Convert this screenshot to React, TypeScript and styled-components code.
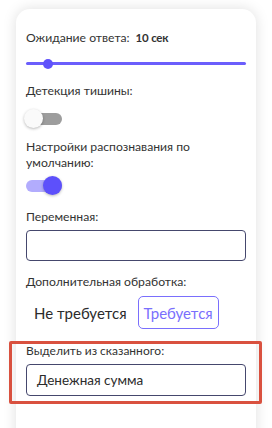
import styled, {createGlobalStyle} from "styled-components";

const GlobalStyle = createGlobalStyle`
    body {
        margin: 0;
        background: #ffffff;
        font-family: "Lato", "Open Sans", sans-serif;
        color: #2b2b2b;
    }
`;

const Page = styled.div`
    width: 272px;
    height: 428px;
    overflow: hidden;
    padding: 9px 16px 0 16px;
    box-sizing: border-box;
`;

const Card = styled.div`
    background: #ffffff;
    border-radius: 14px 14px 0 0;
    box-shadow: 0 0 14px rgba(0, 0, 0, 0.13);
    padding: 21px 10px 40px 10px;
    display: flex;
    flex-direction: column;
`;

const Label = styled.div<{ $mb?: number; $mt?: number; $small?: boolean }>`
    font-size: ${p => p.$small ? 12 : 12.2}px;
    line-height: ${p => p.$small ? 14 : 16}px;
    color: #333333;
    margin-top: ${p => p.$mt ?? 0}px;
    margin-bottom: ${p => p.$mb ?? 0}px;
`;

const Value = styled.b`
    font-weight: 700;
    font-size: 11.5px;
    letter-spacing: -0.2px;
    margin-left: 6px;
`;

const Slider = styled.div`
    position: relative;
    height: 3px;
    background: #6b5efc;
    border-radius: 2px;
    margin: 16px 0 18px 0;
`;

const Thumb = styled.span`
    position: absolute;
    top: -3.5px;
    width: 10px;
    height: 10px;
    border-radius: 50%;
    background: #5f52fb;
    transform: translateX(-50%);
`;

const Toggle = styled.div<{ $on?: boolean; $mb: number }>`
    position: relative;
    width: 36px;
    height: 19px;
    margin-bottom: ${p => p.$mb}px;
    &::before {
        content: "";
        position: absolute;
        left: 0;
        top: 3.5px;
        width: 36px;
        height: 12px;
        border-radius: 6px;
        background: ${p => p.$on ? "#b2acfd" : "#9d9d9d"};
    }
    &::after {
        content: "";
        position: absolute;
        top: 0;
        left: ${p => p.$on ? "17px" : "-2px"};
        width: 19px;
        height: 19px;
        border-radius: 50%;
        background: ${p => p.$on ? "#5d50fb" : "#fafafa"};
        box-shadow: 0 1px 3px rgba(0, 0, 0, 0.28);
    }
`;

const Input = styled.div<{ $h: number }>`
    height: ${p => p.$h}px;
    border: 1px solid #45476d;
    border-radius: 4px;
    box-sizing: border-box;
    display: flex;
    align-items: center;
    padding: 0 10px;
    font-size: 13.5px;
    color: #2b2b2b;
`;

const Options = styled.div`
    display: flex;
    align-items: center;
    gap: 3px;
    margin-top: 6px;
`;

const Option = styled.div<{ $active?: boolean }>`
    font-size: 15px;
    height: 33px;
    display: flex;
    align-items: center;
    padding: 0 ${p => p.$active ? 5 : 7}px;
    border: 1px solid ${p => p.$active ? "#7a6ffd" : "transparent"};
    border-radius: 5px;
    color: ${p => p.$active ? "#7a6ffd" : "#2b2b2b"};
    box-sizing: border-box;
`;

const Highlight = styled.div`
    margin: 12px -16px 0 -17px;
    padding: 0 13px 5px 14px;
    border: 3px solid #d9513f;
    border-radius: 2px;
`;

export default function App() {
    return (
        <>
            <GlobalStyle/>
            <Page>
                <Card>
                    <Label>Ожидание ответа:<Value>10 сек</Value></Label>
                    <Slider><Thumb style={{left: "10%"}}/></Slider>
                    <Label $mb={10}>Детекция тишины:</Label>
                    <Toggle $mb={11}/>
                    <Label $mb={5}>Настройки распознавания по умолчанию:</Label>
                    <Toggle $on $mb={14}/>
                    <Label $mb={5}>Переменная:</Label>
                    <Input $h={31}/>
                    <Label $mt={13}>Дополнительная обработка:</Label>
                    <Options>
                        <Option>Не требуется</Option>
                        <Option $active>Требуется</Option>
                    </Options>
                    <Highlight>
                        <Label $small $mb={6}>Выделить из сказанного:</Label>
                        <Input $h={32}>Денежная сумма</Input>
                    </Highlight>
                </Card>
            </Page>
        </>
    );
}
